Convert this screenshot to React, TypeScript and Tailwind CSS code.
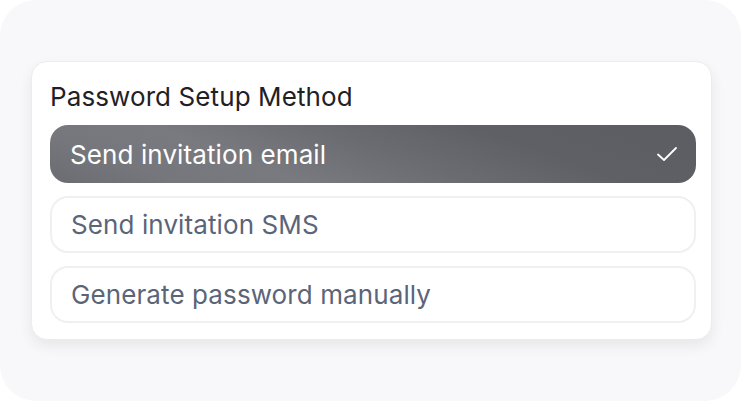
import React from "react";

const options = [
  { label: "Send invitation email", selected: true },
  { label: "Send invitation SMS", selected: false },
  { label: "Generate password manually", selected: false },
];

export default function App() {
  return (
    <div className="w-[741px] h-[401px] bg-white">
      <div
        className="w-full h-full rounded-[36px] bg-[#f8f8fa] pl-[31px] pr-[29px] pt-[61px]"
        style={{ fontFamily: "Inter, 'Noto Sans', sans-serif" }}
      >
        <div className="h-[279px] rounded-[16px] bg-white border border-[#ececf0] shadow-[0_6px_14px_rgba(0,0,0,0.07)] pl-[18px] pr-[15px] pt-[20px]">
          <div className="text-[26px] leading-[30px] text-[#1f2126] tracking-[0.1px]">Password Setup Method</div>
          <div className="mt-[13px] flex flex-col gap-[13px]">
            {options.map((o) =>
              o.selected ? (
                <div
                  key={o.label}
                  className="h-[58px] rounded-[18px] flex items-center justify-between pl-[20px] pr-[18px] text-white bg-[linear-gradient(200deg,#5c5d63_0%,#5f6066_28%,#6b6c71_48%,#797a7f_68%,#76777c_84%,#6b6c71_100%)]"
                >
                  <span className="text-[26px] tracking-[0.1px]">{o.label}</span>
                  <svg width="22" height="16" viewBox="0 0 22 16" fill="none">
                    <path d="M2 8.5 L8 14 L20 2" stroke="white" strokeWidth="1.8" strokeLinecap="round" strokeLinejoin="round" />
                  </svg>
                </div>
              ) : (
                <div
                  key={o.label}
                  className="h-[57px] rounded-[18px] flex items-center pl-[19px] border-2 border-[#f0f0f3] text-[#5a6579]"
                >
                  <span className="text-[26px] tracking-[0.1px]">{o.label}</span>
                </div>
              )
            )}
          </div>
        </div>
      </div>
    </div>
  );
}
